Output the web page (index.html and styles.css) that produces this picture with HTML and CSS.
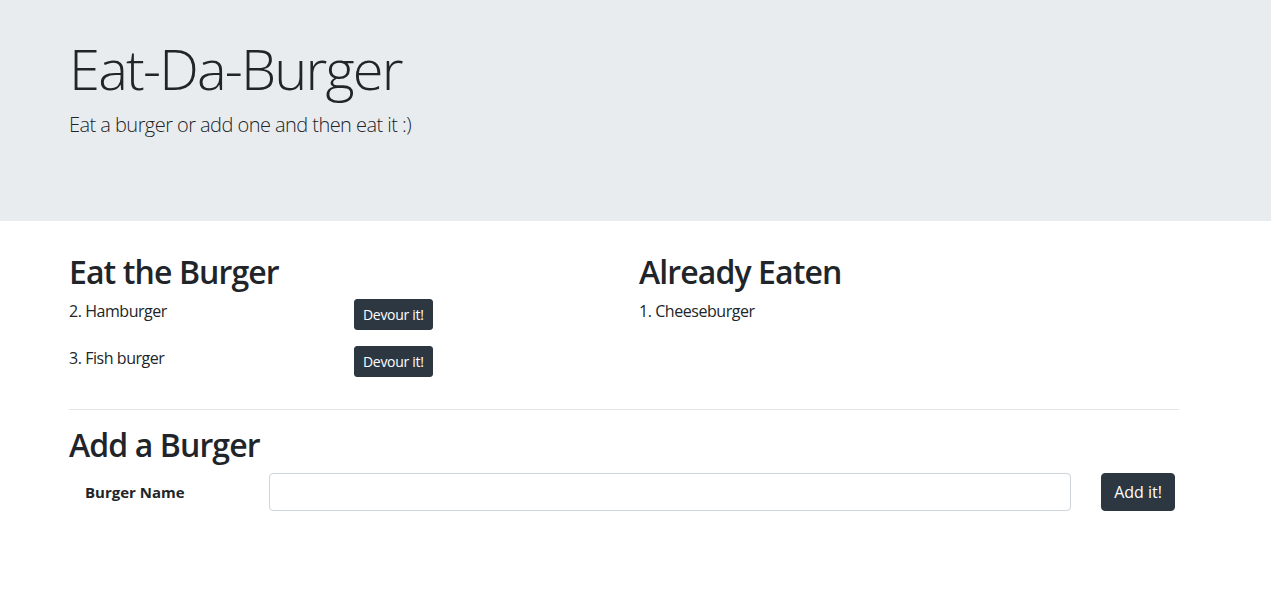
FILE: index.html
```html
<!DOCTYPE html>
<html lang="en">
<head>
<meta charset="utf-8">
<title>Eat-Da-Burger</title>
<link rel="stylesheet" href="styles.css">
</head>
<body>
<header class="jumbotron">
  <div class="container">
    <h1 class="display">Eat-Da-Burger</h1>
    <p class="lead">Eat a burger or add one and then eat it :)</p>
  </div>
</header>
<main class="container">
  <div class="columns">
    <section class="col">
      <h2 class="heading">Eat the Burger</h2>
      <ul class="burger-list">
        <li class="burger-row">
          <span class="burger-name">2. Hamburger</span>
          <span class="burger-action"><button class="btn btn-sm" type="button">Devour it!</button></span>
        </li>
        <li class="burger-row">
          <span class="burger-name">3. Fish burger</span>
          <span class="burger-action"><button class="btn btn-sm" type="button">Devour it!</button></span>
        </li>
      </ul>
    </section>
    <section class="col">
      <h2 class="heading">Already Eaten</h2>
      <ul class="eaten-list">
        <li>1. Cheeseburger</li>
      </ul>
    </section>
  </div>
  <hr class="divider">
  <h2 class="heading">Add a Burger</h2>
  <form class="add-form">
    <label class="add-label" for="burger">Burger Name</label>
    <input class="add-input" id="burger" type="text">
    <button class="btn btn-add" type="button">Add it!</button>
  </form>
</main>
</body>
</html>
```
FILE: styles.css
```css
* { box-sizing: border-box; }
html, body { margin: 0; padding: 0; }
body {
  font-family: "Segoe UI", "Open Sans", "Noto Sans", sans-serif;
  font-size: 16px;
  line-height: 1.5;
  color: #212529;
  background: #fff;
  letter-spacing: -0.45px;
}
.container {
  width: 1140px;
  margin-left: 54px;
  padding: 0 15px;
}
.jumbotron {
  background: #e9ecef;
  height: 221px;
  padding-top: 35px;
  margin-bottom: 32px;
}
.display {
  margin: 0 0 8px;
  font-size: 56px;
  font-weight: 300;
  line-height: 1.2;
  letter-spacing: -1.8px;
}
.lead {
  margin: 0;
  font-size: 20px;
  font-weight: 300;
  line-height: 1.5;
  letter-spacing: -0.55px;
}
.columns {
  display: grid;
  grid-template-columns: 1fr 1fr;
  column-gap: 30px;
}
.heading {
  margin: 0 0 8px;
  font-size: 32px;
  font-weight: 600;
  line-height: 1.2;
  letter-spacing: -0.9px;
}
.burger-list, .eaten-list {
  list-style: none;
  margin: 0;
  padding: 0;
}
.burger-row {
  display: grid;
  grid-template-columns: 285px 1fr;
  height: 31px;
  margin-bottom: 16px;
}
.burger-name { line-height: 24px; }
.btn {
  font-family: inherit;
  color: #fff;
  background: #2c3742;
  border: 1px solid #2c3742;
  cursor: pointer;
}
.btn-sm {
  font-size: 14px;
  line-height: 21px;
  padding: 4px 8px;
  border-radius: 3px;
  letter-spacing: -0.3px;
}
.divider {
  margin: 16px 0;
  border: 0;
  border-top: 1px solid rgba(0,0,0,.1);
}
.add-form {
  display: grid;
  grid-template-columns: 200px 1fr auto;
  align-items: center;
  column-gap: 30px;
  padding-right: 4px;
}
.add-label {
  padding-left: 16px;
  font-weight: 700;
  font-size: 15px;
  letter-spacing: 0;
}
.add-input {
  margin-left: -30px;
  height: 38px;
  border: 1px solid #ced4da;
  border-radius: 4px;
  font-family: inherit;
  font-size: 16px;
  padding: 6px 12px;
}
.btn-add {
  font-size: 16px;
  line-height: 24px;
  padding: 6px 12px;
  border-radius: 4px;
}
```
